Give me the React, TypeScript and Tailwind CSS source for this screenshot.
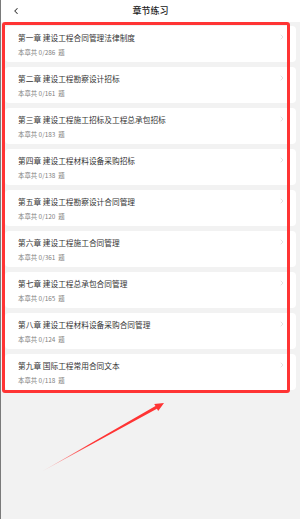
import { ChevronLeft, ChevronRight } from "lucide-react";

const chapters = [
  { title: "第一章 建设工程合同管理法律制度", total: 286 },
  { title: "第二章 建设工程勘察设计招标", total: 161 },
  { title: "第三章 建设工程施工招标及工程总承包招标", total: 183 },
  { title: "第四章 建设工程材料设备采购招标", total: 138 },
  { title: "第五章 建设工程勘察设计合同管理", total: 120 },
  { title: "第六章 建设工程施工合同管理", total: 361 },
  { title: "第七章 建设工程总承包合同管理", total: 165 },
  { title: "第八章 建设工程材料设备采购合同管理", total: 124 },
  { title: "第九章 国际工程常用合同文本", total: 118 },
];

const ChapterCard = ({ title, total }: { title: string; total: number }) => {
  return (
    <div className="h-[36px] rounded-[4px] bg-white pl-[13px] pr-[10px] pt-[6px] flex items-start justify-between">
      <div className="flex flex-col gap-[4px]">
        <div className="text-[7.7px] leading-[12px] text-[#333]">{title}</div>
        <div className="text-[6.4px] leading-[10px] text-[#808080]">
          本章共 0/{total} &nbsp;题
        </div>
      </div>
      <ChevronRight className="mt-[1px] w-[8px] h-[8px] text-[#c8c8c8]" strokeWidth={1.5} />
    </div>
  );
};

export default function App() {
  return (
    <div
      className="relative w-[300px] h-[519px] bg-[#f2f2f2] border-l border-[#7a7a7a] overflow-hidden"
      style={{ fontFamily: '"Noto Sans CJK SC", "Noto Sans", sans-serif' }}
    >
      <div className="h-[22px] bg-white flex items-center px-[10px]">
        <ChevronLeft className="w-[10px] h-[10px] text-[#333]" strokeWidth={2.5} />
        <span className="flex-1 text-center pr-[10px] text-[9px] font-medium text-[#222]">章节练习</span>
      </div>

      <div className="flex flex-col gap-[5px] px-[4px] pt-[4px]">
        {chapters.map((c) => (
          <ChapterCard key={c.title} title={c.title} total={c.total} />
        ))}
      </div>

      {/* annotation overlay */}
      <div className="absolute left-[1px] top-[22px] w-[288px] h-[371px] border-[3px] border-[#ff3434] rounded-[3px] pointer-events-none" />
      <svg className="absolute left-0 top-0 pointer-events-none" width="300" height="519">
        <defs>
          <linearGradient id="fade" x1="40" y1="472" x2="163" y2="403" gradientUnits="userSpaceOnUse">
            <stop offset="0" stopColor="#ff3434" stopOpacity="0.15" />
            <stop offset="0.4" stopColor="#ff3434" stopOpacity="1" />
          </linearGradient>
        </defs>
        <polygon
          points="40,472 155.9,408.7 157.2,410.9 163,403 153.2,403.9 154.5,406.1"
          fill="url(#fade)"
        />
      </svg>
    </div>
  );
}
